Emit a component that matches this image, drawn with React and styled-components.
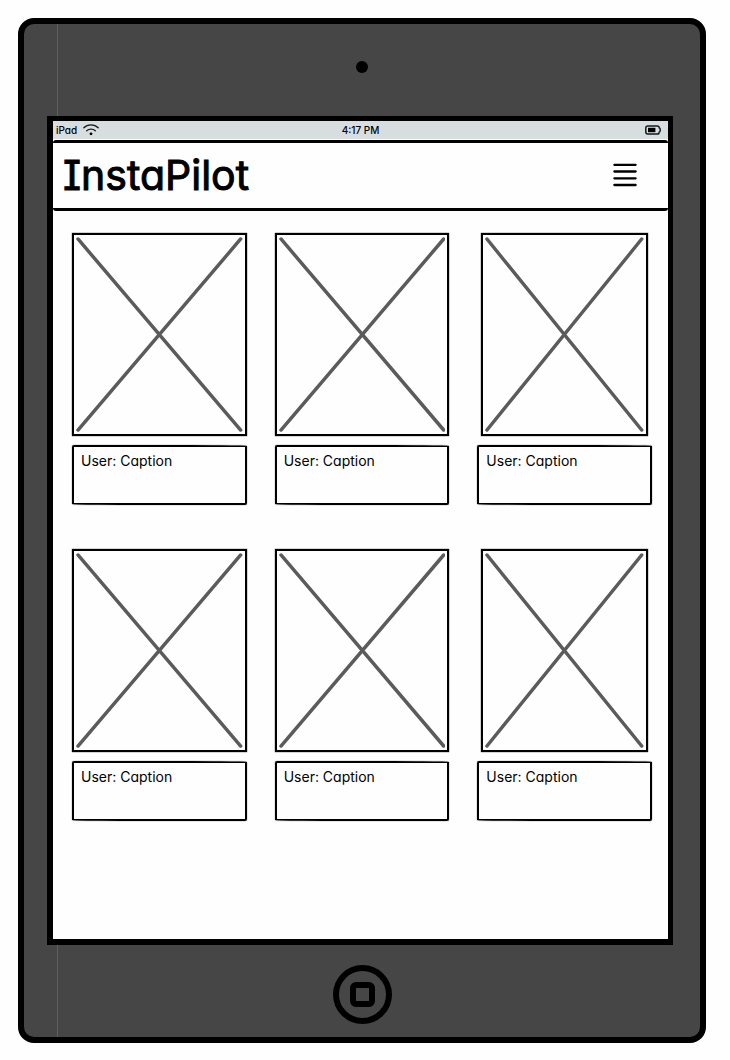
import React from "react";
import styled, { createGlobalStyle } from "styled-components";

const GlobalStyle = createGlobalStyle`
  *, *::before, *::after { box-sizing: border-box; }
  body {
    margin: 0;
    background: #fefefe;
    color: #000;
    font-family: Inter, "Liberation Sans", sans-serif;
    font-feature-settings: "cv08", "cv11";
  }
`;

const Page = styled.div`
  padding: 18px 24px 17px 18px;
`;

const Device = styled.div`
  display: flex;
  flex-direction: column;
  padding: 0 27px 0 23px;
  border: 6px solid #000;
  border-radius: 16px;
  background: linear-gradient(#5f5f5f, #5f5f5f) 33px 0 / 1px 100% no-repeat #464646;
`;

const Bezel = styled.div`
  display: flex;
  align-items: center;
  justify-content: center;
  height: 92px;
  padding: ${(p) => (p.$bottom ? "6px 0 0 4px" : "0 0 6px 4px")};
`;

const Camera = styled.div`
  width: 12px;
  height: 12px;
  border-radius: 50%;
  background: #000;
`;

const HomeButton = styled.button`
  display: grid;
  place-items: center;
  width: 59px;
  height: 59px;
  padding: 0;
  border: 6px solid #000;
  border-radius: 50%;
  background: transparent;

  &::before {
    content: "";
    width: 25px;
    height: 25px;
    border: 6px solid #000;
    border-radius: 6px;
  }
`;

const Screen = styled.div`
  border: solid #000;
  border-width: 5px 5px 6px 6px;
  background: #fefefe;
`;

const StatusBar = styled.div`
  display: grid;
  grid-template-columns: 1fr auto 1fr;
  align-items: center;
  height: 19px;
  padding: 0 3px;
  border-bottom: 1px solid #fefefe;
  background: #d8dee0;
  font-size: 10px;
  font-weight: 500;
  line-height: 18px;
`;

const StatusGroup = styled.div`
  display: flex;
  align-items: center;
  justify-content: ${(p) => (p.$end ? "flex-end" : "flex-start")};
  gap: 6px;
  padding-right: 4px;
`;

const Header = styled.header`
  display: flex;
  align-items: center;
  justify-content: space-between;
  height: 71px;
  padding: 0 31px 2px 10px;
  border: solid #000;
  border-width: 3px 0;
  border-radius: 3px;
`;

const Title = styled.h1`
  margin: 0;
  font-size: 41px;
  font-weight: 400;
  line-height: 48px;
  -webkit-text-stroke: 1px #000;
`;

const MenuButton = styled.button`
  display: block;
  width: 24px;
  height: 24px;
  padding: 0;
  border: 0;
  background: transparent;

  svg { display: block; }
`;

const Gallery = styled.main`
  display: grid;
  grid-template-columns: repeat(3, 1fr);
  gap: 44px 28px;
  padding: 22px 16px 118px 19px;
`;

const Card = styled.figure`
  display: flex;
  flex-direction: column;
  gap: 9px;
  margin: 0;
`;

const Photo = styled.div`
  height: 203px;
  margin: 0 ${(p) => (p.$narrow ? 4 : 0)}px;
  padding: 2px;
  border: 2px solid #000;
  box-shadow: 0 0 1px #000;

  svg {
    display: block;
    width: 100%;
    height: 100%;
  }
`;

const Caption = styled.figcaption`
  height: 60px;
  padding: 5px 7px;
  border: 2px solid #000;
  border-radius: 2px 90px 2px 90px / 2px 1px 2px 1px;
  box-shadow: 0 0 1px #000;
  font-size: 14px;
  line-height: 18px;
`;

const posts = Array.from({ length: 6 }, (_, i) => ({
  id: i,
  text: "User: Caption",
  narrow: i % 3 === 2,
}));

function Placeholder() {
  return (
    <svg viewBox="0 0 168 196" preserveAspectRatio="none" aria-hidden="true">
      <path d="M2 2L166 194M166 2L2 194" stroke="#5b5b5b" strokeWidth="3.5" strokeLinecap="round" />
    </svg>
  );
}

function WifiIcon() {
  return (
    <svg width="16" height="12" viewBox="0 0 16 12" fill="none" stroke="#16191a" strokeLinecap="round" aria-hidden="true">
      <path d="M.8 3.7C4.7-.1 11.3-.1 15.2 3.7" strokeWidth="1.3" />
      <path d="M3.7 6.7C6 4.5 10 4.5 12.3 6.7" strokeWidth="1.3" />
      <circle cx="8" cy="9.8" r="1.4" fill="#000" stroke="none" />
    </svg>
  );
}

function BatteryIcon() {
  return (
    <svg width="16" height="10" viewBox="0 0 16 10" fill="none" aria-hidden="true">
      <path
        d="M2.8 1H12.2C13.6 1 14.2 1.8 14.2 2.8C15.6 3 15.6 7 14.2 7.2C14.2 8.2 13.6 9 12.2 9H2.8C1.4 9 .8 8.2 .8 7V3C.8 1.8 1.4 1 2.8 1Z"
        stroke="#16191a"
        strokeWidth="1.5"
      />
      <rect x="3" y="2.8" width="7.4" height="4.4" fill="#000" />
    </svg>
  );
}

export default function App() {
  return (
    <Page>
      <GlobalStyle />
      <Device>
        <Bezel>
          <Camera />
        </Bezel>
        <Screen>
          <StatusBar>
            <StatusGroup>
              <span>iPad</span>
              <WifiIcon />
            </StatusGroup>
            <span>4:17 PM</span>
            <StatusGroup $end>
              <BatteryIcon />
            </StatusGroup>
          </StatusBar>
          <Header>
            <Title>InstaPilot</Title>
            <MenuButton type="button" aria-label="Menu">
              <svg width="24" height="24" viewBox="0 0 24 24" stroke="#000" strokeWidth="2.3" strokeLinecap="round">
                <path d="M1.4 1.8H22.6M1.4 8.5H22.6M1.4 15.3H22.6M1.4 22H22.6" />
              </svg>
            </MenuButton>
          </Header>
          <Gallery>
            {posts.map((post) => (
              <Card key={post.id}>
                <Photo $narrow={post.narrow}>
                  <Placeholder />
                </Photo>
                <Caption>{post.text}</Caption>
              </Card>
            ))}
          </Gallery>
        </Screen>
        <Bezel $bottom>
          <HomeButton type="button" aria-label="Home" />
        </Bezel>
      </Device>
    </Page>
  );
}
